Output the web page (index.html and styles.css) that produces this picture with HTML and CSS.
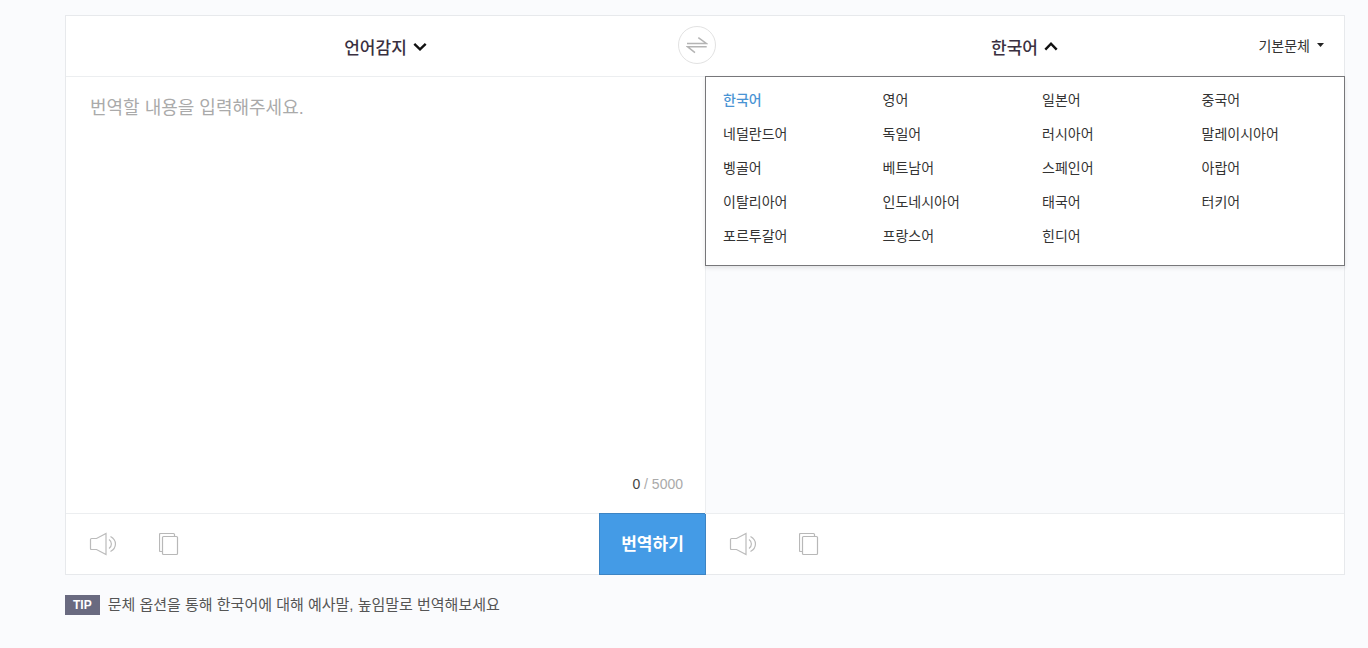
FILE: index.html
```
<!DOCTYPE html>
<html lang="ko">
<head>
<meta charset="utf-8">
<meta name="viewport" content="width=device-width, initial-scale=1.0">
<title>번역기</title>
<link rel="stylesheet" href="styles.css">
</head>
<body>
<main class="page">
<div class="translator">
<button type="button" class="swap" aria-label="언어 바꾸기">
<svg width="22" height="18" viewBox="0 0 22 18" fill="none" stroke="#b4b4b4" stroke-width="1.5"><path d="M1 7.5h19.3L12.3 1.6M20.7 10.7H1.4L9 16.6"/></svg>
</button>

<section class="pane">
<div class="pane-head">
<button type="button" class="lang-btn" aria-expanded="false">언어감지
<svg width="14" height="10" viewBox="0 0 14 10" fill="none" stroke="#111" stroke-width="2.4"><path d="M1.3 2.8L7 8.3l5.7-5.5"/></svg>
</button>
</div>
<div class="pane-body">
<textarea class="source" aria-label="번역할 내용" placeholder="번역할 내용을 입력해주세요."></textarea>
<p class="counter"><span class="count">0</span> / 5000</p>
</div>
<div class="pane-foot">
<button type="button" class="tool" aria-label="듣기">
<svg width="28" height="24" viewBox="0 0 28 24" fill="none" stroke="#bbb" stroke-width="1.2"><path d="M1.5 7.5q0-1 1-1h5l9.5-5v21l-9.500-5h-5q-1 0-1-1z"/><path d="M20 7.500c3.200 2.200 3.200 6.800 0 9M21.500 4.500c6.600 3.600 6.600 11.400 0 15"/></svg>
</button>
<button type="button" class="tool" aria-label="복사">
<svg width="20" height="24" viewBox="0 0 20 24" fill="none" stroke="#b8b8b8" stroke-width="1.2"><path d="M3.500 19.500h-2q-1 0-1-1v-16q0-1 1-1h13q1 0 1 1v2"/><rect x="3.500" y="4.500" width="15" height="18" rx="1"/></svg>
</button>
<button type="button" class="translate">번역하기</button>
</div>
</section>

<section class="pane target">
<div class="pane-head">
<button type="button" class="lang-btn" aria-expanded="true" aria-controls="languages">한국어
<svg width="14" height="10" viewBox="0 0 14 10" fill="none" stroke="#111" stroke-width="2.4"><path d="M1.3 8.700L7 2.700l5.700 6"/></svg>
</button>
<button type="button" class="style-btn">기본문체
<svg width="7" height="4" viewBox="0 0 7 4" fill="#222"><path d="M0 0h7L3.500 4z"/></svg>
</button>
</div>
<div class="pane-body">
<ul class="languages" id="languages">
<li><button type="button" class="selected">한국어</button></li>
<li><button type="button">영어</button></li>
<li><button type="button">일본어</button></li>
<li><button type="button">중국어</button></li>
<li><button type="button">네덜란드어</button></li>
<li><button type="button">독일어</button></li>
<li><button type="button">러시아어</button></li>
<li><button type="button">말레이시아어</button></li>
<li><button type="button">벵골어</button></li>
<li><button type="button">베트남어</button></li>
<li><button type="button">스페인어</button></li>
<li><button type="button">아랍어</button></li>
<li><button type="button">이탈리아어</button></li>
<li><button type="button">인도네시아어</button></li>
<li><button type="button">태국어</button></li>
<li><button type="button">터키어</button></li>
<li><button type="button">포르투갈어</button></li>
<li><button type="button">프랑스어</button></li>
<li><button type="button">힌디어</button></li>
</ul>
</div>
<div class="pane-foot">
<button type="button" class="tool" aria-label="듣기">
<svg width="28" height="24" viewBox="0 0 28 24" fill="none" stroke="#bbb" stroke-width="1.2"><path d="M1.5 7.5q0-1 1-1h5l9.5-5v21l-9.500-5h-5q-1 0-1-1z"/><path d="M20 7.500c3.200 2.200 3.200 6.800 0 9M21.500 4.500c6.600 3.600 6.600 11.400 0 15"/></svg>
</button>
<button type="button" class="tool" aria-label="복사">
<svg width="20" height="24" viewBox="0 0 20 24" fill="none" stroke="#b8b8b8" stroke-width="1.2"><path d="M3.500 19.500h-2q-1 0-1-1v-16q0-1 1-1h13q1 0 1 1v2"/><rect x="3.500" y="4.500" width="15" height="18" rx="1"/></svg>
</button>
</div>
</section>
</div>

<p class="tip"><strong class="tip-label">TIP</strong>문체 옵션을 통해 한국어에 대해 예사말, 높임말로 번역해보세요</p>
</main>
</body>
</html>
```
FILE: styles.css
```
*, *:before, *:after {
  box-sizing: border-box;
}
body {
  margin: 0;
  background: #fafbfd;
  color: #333;
  font-family: "Liberation Sans", "Noto Sans CJK KR", sans-serif;
  font-size: 14px;
}
button {
  margin: 0;
  padding: 0;
  border: 0;
  background: none;
  color: inherit;
  font: inherit;
  cursor: pointer;
}
svg { display: block; }
.page { padding: 15px 23px 15px 65px; }

/* translator box */
.translator {
  position: relative;
  display: grid;
  grid-template-columns: 1fr 1fr;
  border: 1px solid #e7e9ec;
  background: #fff;
}
.pane {
  display: flex;
  flex-direction: column;
  min-width: 0;
}
.pane-head {
  display: grid;
  grid-template-columns: 1fr auto 1fr;
  align-items: center;
  height: 61px;
  padding: 0 20px;
  border-bottom: 1px solid #eceef0;
}
.lang-btn {
  display: flex;
  grid-column: 2;
  align-items: center;
  gap: 6px;
  color: #3a3040;
  font-size: 17px;
  font-weight: 500;
}
.style-btn {
  display: flex;
  align-items: center;
  justify-self: end;
  gap: 7px;
  padding-bottom: 3px;
}

/* sits on the line between both headers */
.swap {
  position: absolute;
  top: 10px;
  left: calc(50% - 27px);
  display: grid;
  place-items: center;
  width: 38px;
  height: 38px;
  border: 1px solid #e2e2e2;
  border-radius: 50%;
}
.pane-body {
  position: relative;
  display: flex;
  flex-direction: column;
  min-height: 436px;
}
.target .pane-body {
  border-left: 1px solid #eceef0;
  background: #fafbfd;
}
.source {
  flex: 1;
  width: 100%;
  padding: 16px 24px;
  border: 0;
  outline: 0;
  background: none;
  resize: none;
  font: inherit;
  font-size: 18px;
}
.source::placeholder { color: #aaa; }
.counter {
  margin: 0;
  padding: 0 22px 20px;
  color: #aaa;
  line-height: 18px;
  text-align: right;
}
.count { color: #444; }

.pane-foot {
  display: flex;
  align-items: center;
  gap: 42px;
  height: 61px;
  padding-left: 23px;
  border-top: 1px solid #eceef0;
}
.target .pane-foot { padding-left: 24px; }
.translate {
  align-self: stretch;
  width: 107px;
  margin: -1px -1px -1px auto;
  padding-bottom: 4px;
  border: 1px solid #3d84c3;
  background: #449be6;
  color: #fff;
  font-size: 17px;
  font-weight: 700;
}

/* language menu */
.languages {
  position: absolute;
  top: -1px;
  right: -1px;
  left: -1px;
  display: grid;
  grid-template-columns: repeat(4, 1fr);
  margin: 0;
  padding: 6px 0 12px;
  border: 1px solid #77777a;
  background: #fff;
  box-shadow: 0 2px 4px rgba(0, 0, 0, .1);
  list-style: none;
}
.languages button {
  width: 100%;
  padding-left: 17px;
  line-height: 34px;
  text-align: left;
}
.languages .selected {
  color: #4a94d4;
  font-weight: 500;
}

.tip {
  display: flex;
  align-items: center;
  gap: 8px;
  margin: 20px 0 0;
  color: #555;
  font-size: 15px;
  line-height: 20px;
}
.tip-label {
  padding: 0 8px;
  background: #696a80;
  color: #fff;
  font-size: 12px;
}
```
